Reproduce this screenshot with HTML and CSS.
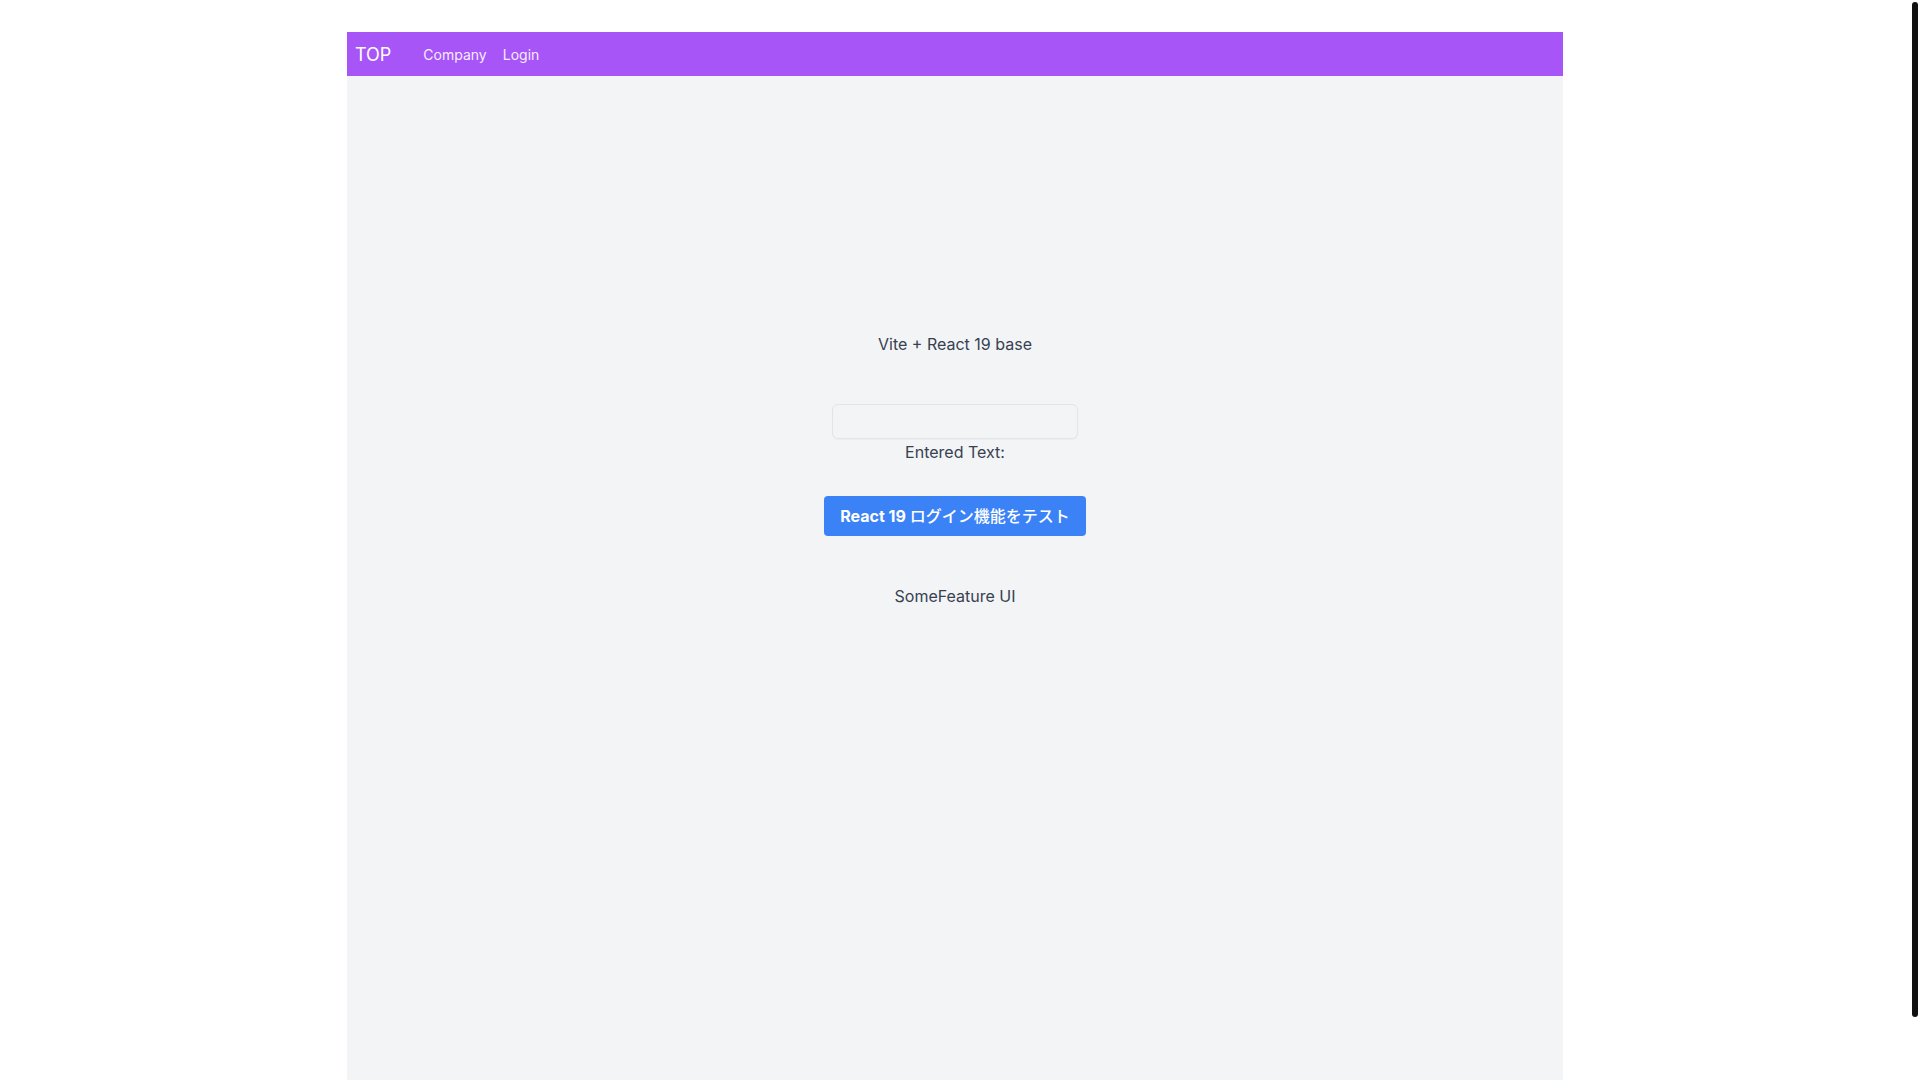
FILE: index.html
```html
<!DOCTYPE html>
<html lang="ja">
<head>
<meta charset="utf-8">
<title>Vite + React 19</title>
<link rel="stylesheet" href="styles.css">
</head>
<body>
<div class="page">
  <div class="app">
    <nav class="navbar">
      <a class="brand" href="#">TOP</a>
      <div class="links">
        <a class="link" href="#">Company</a>
        <a class="link" href="#">Login</a>
      </div>
    </nav>
    <main class="main">
      <p class="title">Vite + React 19 base</p>
      <div class="field">
        <input class="text-input" type="text" aria-label="text">
        <p class="entered">Entered Text:</p>
      </div>
      <button class="btn" type="button">React 19 <span class="btn-ja">ログイン機能をテスト</span></button>
      <p class="feature">SomeFeature UI</p>
    </main>
  </div>
</div>
<div class="scroll-thumb"></div>
</body>
</html>
```

FILE: styles.css
```css
html {
  background: #ffffff;
  overflow: hidden;
}
body {
  margin: 0;
  font-family: Inter, "Noto Sans CJK JP", sans-serif;
  color: #374151;
  background: #ffffff;
}
.page {
  width: calc(100vw - 10px);
  padding-top: 32px;
}
.app {
  width: 1216px;
  margin: 0 auto;
}
.navbar {
  height: 44px;
  background: #a855f7;
  display: flex;
  align-items: center;
  padding: 0 8px;
  box-sizing: border-box;
}
.brand {
  color: #ffffff;
  font-size: 18px;
  text-decoration: none;
  margin-right: 32px;
}
.links {
  display: flex;
  gap: 16px;
}
.link {
  color: #f5ecff;
  font-size: 14px;
  text-decoration: none;
}
.main {
  background: #f3f4f6;
  min-height: 1069px;
  box-sizing: border-box;
  padding-top: 256px;
  display: flex;
  flex-direction: column;
  align-items: center;
  font-size: 16px;
  line-height: 24px;
}
.title {
  margin: 0 0 48px;
}
.field {
  display: flex;
  flex-direction: column;
  align-items: center;
}
.text-input {
  width: 246px;
  height: 35px;
  box-sizing: border-box;
  border: 1px solid #e3e4e7;
  border-radius: 6px;
  background: #f3f4f6;
  box-shadow: 0 1px 1px rgba(0, 0, 0, 0.03);
  font: inherit;
  padding: 4px 8px;
}
.entered {
  margin: 1px 0 0;
}
.btn {
  margin-top: 32px;
  height: 40px;
  padding: 0 16px;
  border: none;
  border-radius: 4px;
  background: #3b82f6;
  color: #ffffff;
  font-family: Inter, "Noto Sans CJK JP", sans-serif;
  font-size: 16px;
  font-weight: 700;
  line-height: 24px;
}
.btn-ja {
  font-weight: 500;
}
.feature {
  margin: 48px 0 0;
}
.scroll-thumb {
  position: fixed;
  top: 2px;
  right: 2px;
  width: 6px;
  height: 1015px;
  background: #111111;
  border-radius: 3px;
}
```
